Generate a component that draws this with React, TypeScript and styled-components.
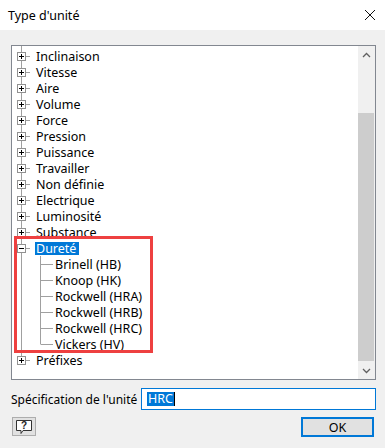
import styled, { createGlobalStyle } from "styled-components";

const GlobalStyle = createGlobalStyle`
  html, body {
    margin: 0;
    padding: 0;
    background: #f0f0f0;
  }
  body {
    font-family: "Segoe UI", "Noto Sans", sans-serif;
    font-size: 12.5px;
    color: #000;
  }
`;

const LINE = "#a0a0a0";

const closedGroups = [
  "Inclinaison",
  "Vitesse",
  "Aire",
  "Volume",
  "Force",
  "Pression",
  "Puissance",
  "Travailler",
  "Non définie",
  "Electrique",
  "Luminosité",
  "Substance",
];

const hardness = [
  "Brinell (HB)",
  "Knoop (HK)",
  "Rockwell (HRA)",
  "Rockwell (HRB)",
  "Rockwell (HRC)",
  "Vickers (HV)",
];

const Expander = ({ open, last }: { open?: boolean; last?: boolean }) => (
  <svg width="23" height="16" viewBox="0 0 23 16">
    <line x1="9.5" y1="0" x2="9.5" y2={last ? 8 : 16} stroke={LINE} />
    <line x1="13" y1="8.5" x2="18" y2="8.5" stroke={LINE} />
    <rect x="5.5" y="4.5" width="8" height="8" fill="#fff" stroke="#919191" />
    <line x1="7" y1="8.5" x2="12" y2="8.5" stroke="#000" />
    {!open && <line x1="9.5" y1="6" x2="9.5" y2="11" stroke="#000" />}
  </svg>
);

const Branch = ({ last }: { last?: boolean }) => (
  <svg width="42" height="16" viewBox="0 0 42 16">
    <line x1="9.5" y1="0" x2="9.5" y2="16" stroke={LINE} />
    <line x1="28.5" y1="0" x2="28.5" y2={last ? 8.5 : 16} stroke={LINE} />
    <line x1="29" y1="8.5" x2="41" y2="8.5" stroke={LINE} />
  </svg>
);

export default function App() {
  return (
    <Dialog>
      <GlobalStyle />
      <TitleBar>
        <Title>Type d'unité</Title>
        <CloseIcon width="12" height="12" viewBox="0 0 12 12">
          <path d="M1 1 L11 11 M11 1 L1 11" stroke="#111" strokeWidth="1" />
        </CloseIcon>
      </TitleBar>

      <Body>
        <TreeBox>
          <List>
            <Lead />
            {closedGroups.map((name) => (
              <Row key={name}>
                <Expander />
                <Label>{name}</Label>
              </Row>
            ))}
            <Marked>
              <Row>
                <Expander open />
                <Label selected>Dureté</Label>
              </Row>
              {hardness.map((name, i) => (
                <Row key={name}>
                  <Branch last={i === hardness.length - 1} />
                  <Label>{name}</Label>
                </Row>
              ))}
            </Marked>
            <Row>
              <Expander last />
              <Label>Préfixes</Label>
            </Row>
          </List>
          <ScrollBar>
            <Arrow>
              <svg width="9" height="6" viewBox="0 0 9 6">
                <path d="M1 5 L4.5 1.5 L8 5" fill="none" stroke="#606060" strokeWidth="1.3" />
              </svg>
            </Arrow>
            <Track>
              <Thumb />
            </Track>
            <Arrow>
              <svg width="9" height="6" viewBox="0 0 9 6">
                <path d="M1 1 L4.5 4.5 L8 1" fill="none" stroke="#606060" strokeWidth="1.3" />
              </svg>
            </Arrow>
          </ScrollBar>
        </TreeBox>

        <SpecRow>
          <SpecLabel>Spécification de l'unité</SpecLabel>
          <Input>
            <Selection>HRC</Selection>
            <Caret />
          </Input>
        </SpecRow>

        <ButtonRow>
          <HelpButton>
            <svg width="18" height="16" viewBox="0 0 18 16">
              <path
                d="M1.5 1.5 H16.5 V11.5 H8 L6 14.5 V11.5 H1.5 Z"
                fill="#fff"
                stroke="#333"
              />
              <text
                x="9"
                y="10"
                textAnchor="middle"
                fontSize="10"
                fontWeight="bold"
                fontFamily="Liberation Sans, sans-serif"
                fill="#222"
              >
                ?
              </text>
            </svg>
          </HelpButton>
          <OkButton>OK</OkButton>
        </ButtonRow>
      </Body>
    </Dialog>
  );
}

const Dialog = styled.div`
  width: 385px;
  height: 448px;
  display: flex;
  flex-direction: column;
  background: #f0f0f0;
  overflow: hidden;
`;

const TitleBar = styled.div`
  height: 30px;
  background: #fff;
  display: flex;
  align-items: center;
  justify-content: space-between;
  padding: 0 8px 0 8px;
  flex-shrink: 0;
`;

const Title = styled.div`
  font-size: 12.5px;
  color: #000;
`;

const CloseIcon = styled.svg`
  margin-right: 1px;
`;

const Body = styled.div`
  display: flex;
  flex-direction: column;
  padding: 15px 9px 0 11px;
`;

const TreeBox = styled.div`
  height: 335px;
  box-sizing: border-box;
  border: 1px solid #828790;
  background: #fff;
  display: flex;
`;

const List = styled.div`
  flex: 1;
  display: flex;
  flex-direction: column;
`;

const Lead = styled.div`
  height: 2px;
  margin-left: 9px;
  border-left: 1px solid ${LINE};
`;

const Row = styled.div`
  height: 16px;
  display: flex;
  align-items: center;
  svg {
    flex-shrink: 0;
  }
`;

const Label = styled.span<{ selected?: boolean }>`
  height: 13px;
  line-height: 13px;
  padding: 0 3px 0 1px;
  white-space: nowrap;
  background: ${(p) => (p.selected ? "#0078d7" : "transparent")};
  color: ${(p) => (p.selected ? "#fff" : "#000")};
`;

const Marked = styled.div`
  position: relative;
  display: flex;
  flex-direction: column;
  &::after {
    content: "";
    position: absolute;
    top: -4px;
    bottom: -1px;
    left: 2px;
    width: 139px;
    box-sizing: border-box;
    border: 3px solid #ee4040;
    pointer-events: none;
  }
`;

const ScrollBar = styled.div`
  width: 17px;
  background: #f0f0f0;
  display: flex;
  flex-direction: column;
`;

const Arrow = styled.div`
  height: 17px;
  display: flex;
  align-items: center;
  justify-content: center;
`;

const Track = styled.div`
  flex: 1;
  display: flex;
  flex-direction: column;
`;

const Thumb = styled.div`
  margin-top: 50px;
  height: 248px;
  background: #cdcdcd;
  margin-right: 1px;
`;

const SpecRow = styled.div`
  margin-top: 8px;
  display: flex;
  align-items: center;
  justify-content: space-between;
`;

const SpecLabel = styled.span`
  font-size: 12px;
  white-space: nowrap;
`;

const Input = styled.div`
  width: 235px;
  height: 22px;
  box-sizing: border-box;
  border: 1px solid #0078d7;
  background: #fff;
  display: flex;
  align-items: center;
  padding-left: 5px;
`;

const Selection = styled.span`
  background: #0078d7;
  color: #fff;
  line-height: 14px;
  height: 14px;
  padding: 0 1px;
`;

const Caret = styled.span`
  width: 1px;
  height: 14px;
  background: #000;
`;

const ButtonRow = styled.div`
  margin-top: 7px;
  display: flex;
  align-items: flex-start;
  justify-content: space-between;
  padding-left: 1px;
  margin-right: 2px;
`;

const HelpButton = styled.div`
  width: 24px;
  height: 19px;
  box-sizing: border-box;
  border: 1px solid #adadad;
  background: #e1e1e1;
  display: flex;
  align-items: center;
  justify-content: center;
`;

const OkButton = styled.div`
  width: 73px;
  height: 20px;
  box-sizing: border-box;
  border: 2px solid #0078d7;
  background: #e1e1e1;
  display: flex;
  align-items: center;
  justify-content: center;
  font-size: 12.5px;
`;
